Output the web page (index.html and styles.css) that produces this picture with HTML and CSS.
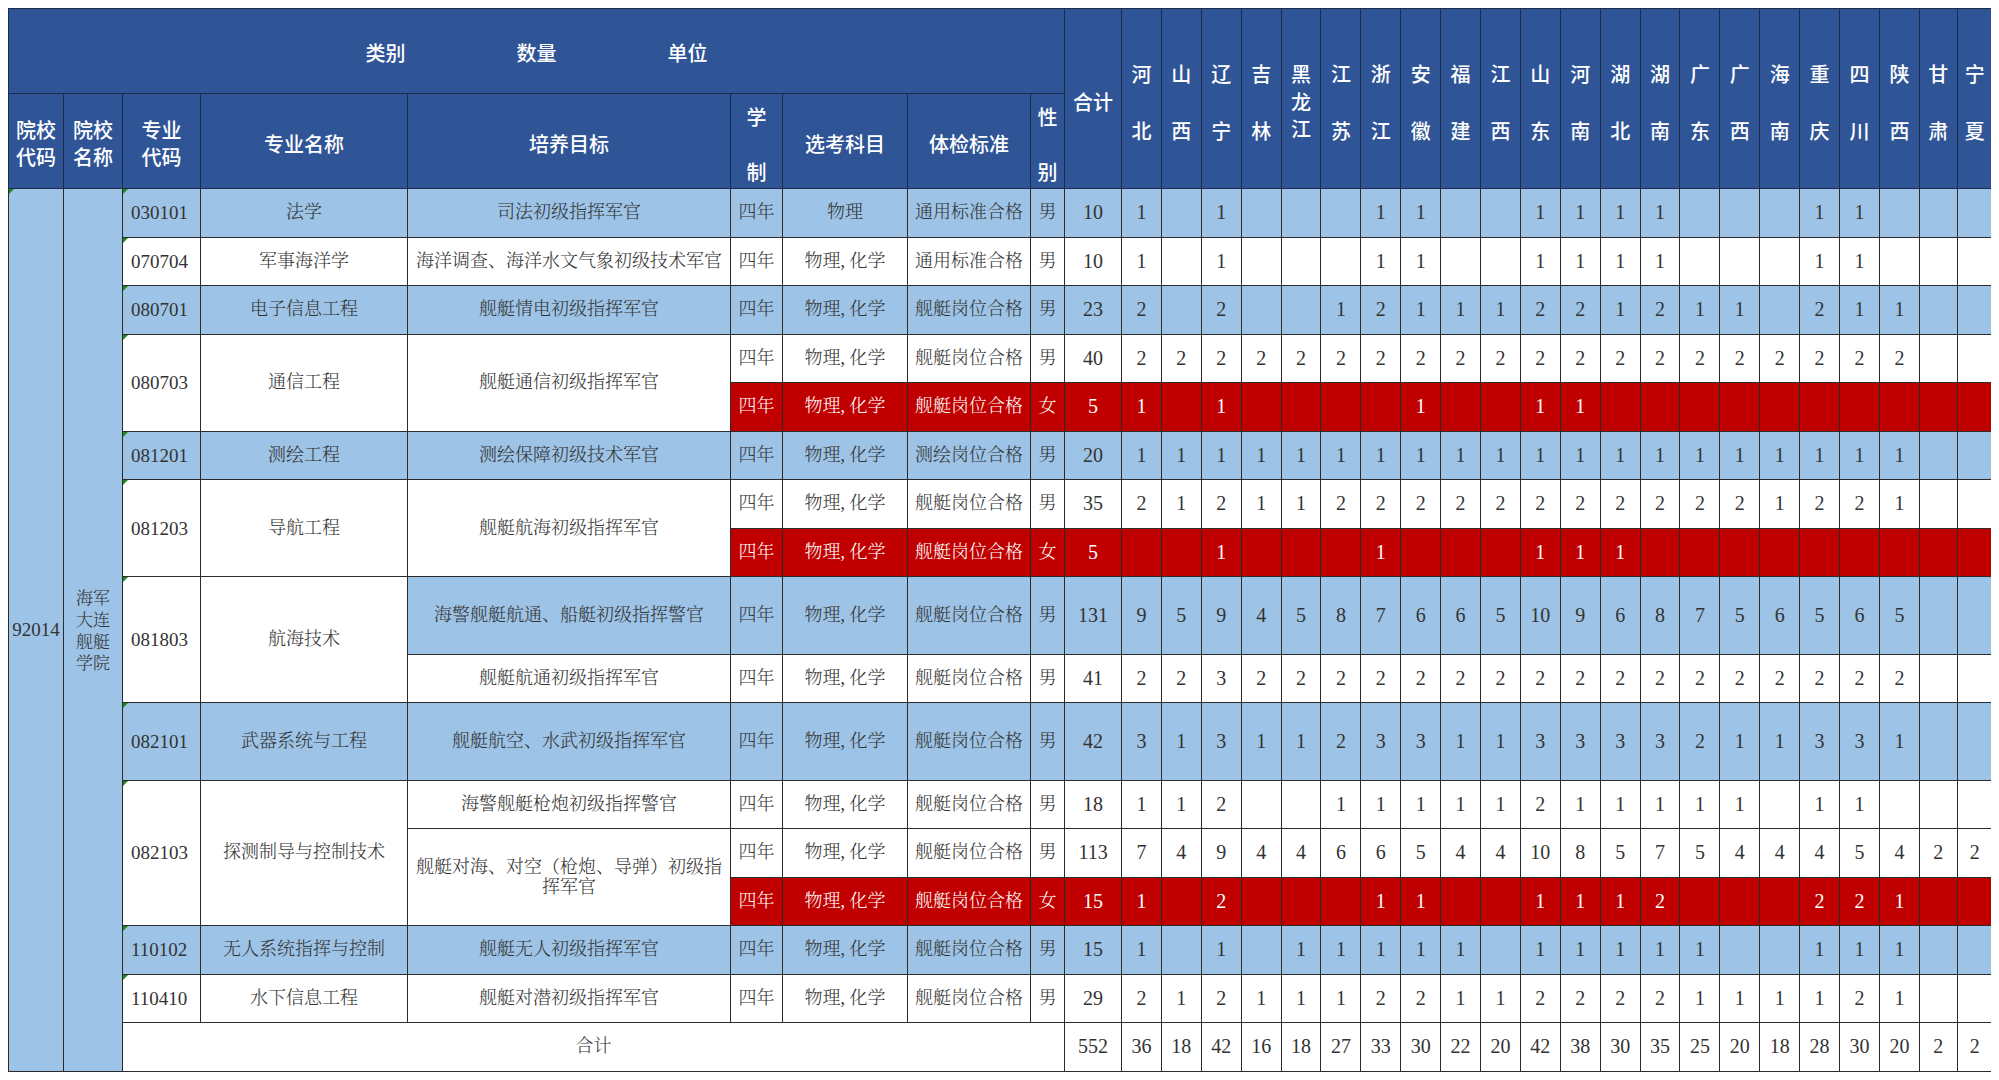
FILE: index.html
```html
<!DOCTYPE html>
<html lang="zh-CN">
<head>
<meta charset="utf-8">
<title>海军大连舰艇学院 招生计划</title>
<link rel="stylesheet" href="styles.css">
</head>
<body>
<table class="sheet">
<colgroup>
<col class="c-sch"><col class="c-uni"><col class="c-code"><col class="c-name"><col class="c-goal"><col class="c-len"><col class="c-subj"><col class="c-phys"><col class="c-sex"><col class="c-sum">
<col class="c-p"><col class="c-p"><col class="c-p"><col class="c-p"><col class="c-p"><col class="c-p"><col class="c-p"><col class="c-p"><col class="c-p"><col class="c-p">
<col class="c-p"><col class="c-p"><col class="c-p"><col class="c-p"><col class="c-p"><col class="c-p"><col class="c-p"><col class="c-p"><col class="c-p"><col class="c-p">
<col class="c-p21"><col class="c-p22">
</colgroup>
<thead>
<tr class="h1">
<th colspan="9" class="cap"><div class="caps"><span>类别</span><span>数量</span><span>单位</span></div></th>
<th rowspan="2" class="hsum">合计</th>
<th rowspan="2" class="prov">河<br>北</th>
<th rowspan="2" class="prov">山<br>西</th>
<th rowspan="2" class="prov">辽<br>宁</th>
<th rowspan="2" class="prov">吉<br>林</th>
<th rowspan="2" class="prov3">黑<br>龙<br>江</th>
<th rowspan="2" class="prov">江<br>苏</th>
<th rowspan="2" class="prov">浙<br>江</th>
<th rowspan="2" class="prov">安<br>徽</th>
<th rowspan="2" class="prov">福<br>建</th>
<th rowspan="2" class="prov">江<br>西</th>
<th rowspan="2" class="prov">山<br>东</th>
<th rowspan="2" class="prov">河<br>南</th>
<th rowspan="2" class="prov">湖<br>北</th>
<th rowspan="2" class="prov">湖<br>南</th>
<th rowspan="2" class="prov">广<br>东</th>
<th rowspan="2" class="prov">广<br>西</th>
<th rowspan="2" class="prov">海<br>南</th>
<th rowspan="2" class="prov">重<br>庆</th>
<th rowspan="2" class="prov">四<br>川</th>
<th rowspan="2" class="prov">陕<br>西</th>
<th rowspan="2" class="prov">甘<br>肃</th>
<th rowspan="2" class="prov">宁<br>夏</th>
</tr>
<tr class="h2">
<th class="two">院校<br>代码</th>
<th class="two">院校<br>名称</th>
<th class="two">专业<br>代码</th>
<th class="one">专业名称</th>
<th class="one">培养目标</th>
<th class="dist"><div class="spread"><span>学</span><span>制</span></div></th>
<th class="one">选考科目</th>
<th class="one">体检标准</th>
<th class="dist"><div class="spread"><span>性</span><span>别</span></div></th>
</tr>
</thead>
<tbody>
<tr class="n b">
<td rowspan="17" class="sch flag cb">92014</td>
<td rowspan="17" class="uni cb">海军<br>大连<br>舰艇<br>学院</td>
<td class="code flag">030101</td><td>法学</td><td>司法初级指挥军官</td><td>四年</td><td>物理</td><td>通用标准合格</td><td>男</td>
<td>10</td><td>1</td><td></td><td>1</td><td></td><td></td><td></td><td>1</td><td>1</td><td></td><td></td><td>1</td><td>1</td><td>1</td><td>1</td><td></td><td></td><td></td><td>1</td><td>1</td><td></td><td></td><td></td>
</tr>
<tr class="n w">
<td class="code flag">070704</td><td>军事海洋学</td><td>海洋调查、海洋水文气象初级技术军官</td><td>四年</td><td>物理, 化学</td><td>通用标准合格</td><td>男</td>
<td>10</td><td>1</td><td></td><td>1</td><td></td><td></td><td></td><td>1</td><td>1</td><td></td><td></td><td>1</td><td>1</td><td>1</td><td>1</td><td></td><td></td><td></td><td>1</td><td>1</td><td></td><td></td><td></td>
</tr>
<tr class="n b">
<td class="code flag">080701</td><td>电子信息工程</td><td>舰艇情电初级指挥军官</td><td>四年</td><td>物理, 化学</td><td>舰艇岗位合格</td><td>男</td>
<td>23</td><td>2</td><td></td><td>2</td><td></td><td></td><td>1</td><td>2</td><td>1</td><td>1</td><td>1</td><td>2</td><td>2</td><td>1</td><td>2</td><td>1</td><td>1</td><td></td><td>2</td><td>1</td><td>1</td><td></td><td></td>
</tr>
<tr class="n w">
<td rowspan="2" class="code flag">080703</td><td rowspan="2">通信工程</td><td rowspan="2">舰艇通信初级指挥军官</td><td>四年</td><td>物理, 化学</td><td>舰艇岗位合格</td><td>男</td>
<td>40</td><td>2</td><td>2</td><td>2</td><td>2</td><td>2</td><td>2</td><td>2</td><td>2</td><td>2</td><td>2</td><td>2</td><td>2</td><td>2</td><td>2</td><td>2</td><td>2</td><td>2</td><td>2</td><td>2</td><td>2</td><td></td><td></td>
</tr>
<tr class="n r">
<td>四年</td><td>物理, 化学</td><td>舰艇岗位合格</td><td>女</td>
<td>5</td><td>1</td><td></td><td>1</td><td></td><td></td><td></td><td></td><td>1</td><td></td><td></td><td>1</td><td>1</td><td></td><td></td><td></td><td></td><td></td><td></td><td></td><td></td><td></td><td></td>
</tr>
<tr class="n b">
<td class="code flag">081201</td><td>测绘工程</td><td>测绘保障初级技术军官</td><td>四年</td><td>物理, 化学</td><td>测绘岗位合格</td><td>男</td>
<td>20</td><td>1</td><td>1</td><td>1</td><td>1</td><td>1</td><td>1</td><td>1</td><td>1</td><td>1</td><td>1</td><td>1</td><td>1</td><td>1</td><td>1</td><td>1</td><td>1</td><td>1</td><td>1</td><td>1</td><td>1</td><td></td><td></td>
</tr>
<tr class="n w">
<td rowspan="2" class="code flag">081203</td><td rowspan="2">导航工程</td><td rowspan="2">舰艇航海初级指挥军官</td><td>四年</td><td>物理, 化学</td><td>舰艇岗位合格</td><td>男</td>
<td>35</td><td>2</td><td>1</td><td>2</td><td>1</td><td>1</td><td>2</td><td>2</td><td>2</td><td>2</td><td>2</td><td>2</td><td>2</td><td>2</td><td>2</td><td>2</td><td>2</td><td>1</td><td>2</td><td>2</td><td>1</td><td></td><td></td>
</tr>
<tr class="n r">
<td>四年</td><td>物理, 化学</td><td>舰艇岗位合格</td><td>女</td>
<td>5</td><td></td><td></td><td>1</td><td></td><td></td><td></td><td>1</td><td></td><td></td><td></td><td>1</td><td>1</td><td>1</td><td></td><td></td><td></td><td></td><td></td><td></td><td></td><td></td><td></td>
</tr>
<tr class="t b">
<td rowspan="2" class="code flag cw">081803</td><td rowspan="2" class="cw">航海技术</td><td>海警舰艇航通、船艇初级指挥警官</td><td>四年</td><td>物理, 化学</td><td>舰艇岗位合格</td><td>男</td>
<td>131</td><td>9</td><td>5</td><td>9</td><td>4</td><td>5</td><td>8</td><td>7</td><td>6</td><td>6</td><td>5</td><td>10</td><td>9</td><td>6</td><td>8</td><td>7</td><td>5</td><td>6</td><td>5</td><td>6</td><td>5</td><td></td><td></td>
</tr>
<tr class="n w">
<td>舰艇航通初级指挥军官</td><td>四年</td><td>物理, 化学</td><td>舰艇岗位合格</td><td>男</td>
<td>41</td><td>2</td><td>2</td><td>3</td><td>2</td><td>2</td><td>2</td><td>2</td><td>2</td><td>2</td><td>2</td><td>2</td><td>2</td><td>2</td><td>2</td><td>2</td><td>2</td><td>2</td><td>2</td><td>2</td><td>2</td><td></td><td></td>
</tr>
<tr class="t b">
<td class="code flag">082101</td><td>武器系统与工程</td><td>舰艇航空、水武初级指挥军官</td><td>四年</td><td>物理, 化学</td><td>舰艇岗位合格</td><td>男</td>
<td>42</td><td>3</td><td>1</td><td>3</td><td>1</td><td>1</td><td>2</td><td>3</td><td>3</td><td>1</td><td>1</td><td>3</td><td>3</td><td>3</td><td>3</td><td>2</td><td>1</td><td>1</td><td>3</td><td>3</td><td>1</td><td></td><td></td>
</tr>
<tr class="n w">
<td rowspan="3" class="code flag">082103</td><td rowspan="3">探测制导与控制技术</td><td>海警舰艇枪炮初级指挥警官</td><td>四年</td><td>物理, 化学</td><td>舰艇岗位合格</td><td>男</td>
<td>18</td><td>1</td><td>1</td><td>2</td><td></td><td></td><td>1</td><td>1</td><td>1</td><td>1</td><td>1</td><td>2</td><td>1</td><td>1</td><td>1</td><td>1</td><td>1</td><td></td><td>1</td><td>1</td><td></td><td></td><td></td>
</tr>
<tr class="n w">
<td rowspan="2" class="goal2 cw">舰艇对海、对空（枪炮、导弹）初级指挥军官</td><td>四年</td><td>物理, 化学</td><td>舰艇岗位合格</td><td>男</td>
<td>113</td><td>7</td><td>4</td><td>9</td><td>4</td><td>4</td><td>6</td><td>6</td><td>5</td><td>4</td><td>4</td><td>10</td><td>8</td><td>5</td><td>7</td><td>5</td><td>4</td><td>4</td><td>4</td><td>5</td><td>4</td><td>2</td><td>2</td>
</tr>
<tr class="n r">
<td>四年</td><td>物理, 化学</td><td>舰艇岗位合格</td><td>女</td>
<td>15</td><td>1</td><td></td><td>2</td><td></td><td></td><td></td><td>1</td><td>1</td><td></td><td></td><td>1</td><td>1</td><td>1</td><td>2</td><td></td><td></td><td></td><td>2</td><td>2</td><td>1</td><td></td><td></td>
</tr>
<tr class="n b">
<td class="code flag">110102</td><td>无人系统指挥与控制</td><td>舰艇无人初级指挥军官</td><td>四年</td><td>物理, 化学</td><td>舰艇岗位合格</td><td>男</td>
<td>15</td><td>1</td><td></td><td>1</td><td></td><td>1</td><td>1</td><td>1</td><td>1</td><td>1</td><td></td><td>1</td><td>1</td><td>1</td><td>1</td><td>1</td><td></td><td></td><td>1</td><td>1</td><td>1</td><td></td><td></td>
</tr>
<tr class="n w">
<td class="code flag">110410</td><td>水下信息工程</td><td>舰艇对潜初级指挥军官</td><td>四年</td><td>物理, 化学</td><td>舰艇岗位合格</td><td>男</td>
<td>29</td><td>2</td><td>1</td><td>2</td><td>1</td><td>1</td><td>1</td><td>2</td><td>2</td><td>1</td><td>1</td><td>2</td><td>2</td><td>2</td><td>2</td><td>1</td><td>1</td><td>1</td><td>1</td><td>2</td><td>1</td><td></td><td></td>
</tr>
<tr class="n w total">
<td colspan="7">合计</td>
<td>552</td><td>36</td><td>18</td><td>42</td><td>16</td><td>18</td><td>27</td><td>33</td><td>30</td><td>22</td><td>20</td><td>42</td><td>38</td><td>30</td><td>35</td><td>25</td><td>20</td><td>18</td><td>28</td><td>30</td><td>20</td><td>2</td><td>2</td>
</tr>
</tbody>
</table>
</body>
</html>
```

FILE: styles.css
```css
html, body {
  background: #ffffff;
}

body {
  margin: 8px;
}

.sheet {
  border-collapse: collapse;
  table-layout: fixed;
  width: 1984px;
  font-family: "Liberation Serif", "Noto Serif CJK SC", "Noto Sans CJK SC", serif;
  color: #333333;
}

.c-sch { width: 55px; }
.c-uni { width: 59px; }
.c-code { width: 78px; }
.c-name { width: 207px; }
.c-goal { width: 323px; }
.c-len { width: 52px; }
.c-subj { width: 125px; }
.c-phys { width: 123px; }
.c-sex { width: 34px; }
.c-sum { width: 57px; }
.c-p { width: 39.9px; }
.c-p21 { width: 38px; }
.c-p22 { width: 35px; }

.sheet th,
.sheet td {
  border: 1px solid #2b2b2b;
  padding: 0 3px;
  text-align: center;
  vertical-align: middle;
  overflow: hidden;
}

/* header */
.sheet th {
  background: #2f5597;
  color: #ffffff;
  font-family: "Noto Sans CJK SC", "Noto Sans", sans-serif;
  font-weight: 500;
  font-size: 20px;
  line-height: 27px;
  border-color: #1d2c4c;
  padding: 0;
}

.h1 { height: 85px; }
.h2 { height: 95px; }

.caps {
  display: flex;
  justify-content: center;
  gap: 111px;
  padding-top: 2px;
}

.sheet th.prov {
  line-height: 57px;
  padding-top: 6px;
}

.sheet th.prov3 {
  line-height: 27.5px;
  padding-top: 6px;
}

.sheet th.hsum {
  padding-top: 6px;
}

.sheet th.dist {
  padding-top: 6px;
}

.spread {
  display: flex;
  flex-direction: column;
  align-items: center;
  gap: 28px;
}

.sheet th.two {
  padding-top: 4px;
}

.sheet th.one {
  padding-top: 5px;
}

/* body rows */
.n { height: 48.5px; }
.t { height: 77.5px; }

.sheet td {
  font-size: 18px;
  line-height: 21px;
  font-weight: 300;
}

.sheet tbody td:nth-last-child(-n+23) {
  font-size: 20px;
}

tr.b td { background: #9dc3e6; }
tr.w td { background: #ffffff; }
tr.r td { background: #c00000; color: #ffffff; }

.sheet td.cw { background: #ffffff; color: #333333; }
.sheet td.cb { background: #9dc3e6; color: #333333; }

.sheet td.code {
  font-size: 19px;
  text-align: left;
  padding-left: 8px;
}

.sheet td.sch {
  font-size: 19px;
  padding: 0 1px;
}

.sheet td.uni {
  font-size: 17px;
  line-height: 21.7px;
  padding-top: 4px;
}

.sheet td.goal2 {
  line-height: 20px;
  padding: 0 5px;
}

.flag {
  position: relative;
}

.flag::before {
  content: "";
  position: absolute;
  top: 0;
  left: 0;
  border-top: 5px solid #1e8a1e;
  border-right: 5px solid transparent;
}
```
